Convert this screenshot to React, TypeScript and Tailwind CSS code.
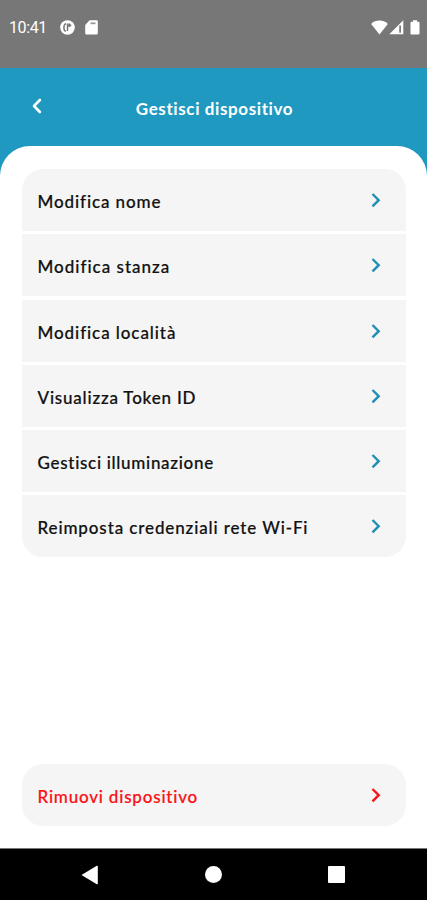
import React from "react";

interface MenuItem {
    label: string;
    tracking: string;
}

const items: MenuItem[] = [
    { label: "Modifica nome", tracking: "tracking-[0.9px]" },
    { label: "Modifica stanza", tracking: "tracking-[1px]" },
    { label: "Modifica località", tracking: "tracking-[0.92px]" },
    { label: "Visualizza Token ID", tracking: "tracking-[0.8px]" },
    { label: "Gestisci illuminazione", tracking: "tracking-[0.7px]" },
    { label: "Reimposta credenziali rete Wi-Fi", tracking: "tracking-[0.88px]" },
];

const Chevron: React.FC<{ className: string }> = ({ className }) => (
    <svg
        className={className}
        width="10"
        height="16"
        viewBox="0 0 10 16"
        fill="none"
        stroke="currentColor"
        strokeWidth="2.4"
    >
        <path d="M1.5 2 7.700 8.200l-6.200 6.200" />
    </svg>
);

const StatusBar: React.FC = () => (
    <div className="flex h-[68px] shrink-0 items-start bg-[#777777] pt-[19px] text-white">
        <span className="ml-[9px] w-[51px] font-[Roboto,sans-serif] text-[16px] leading-[18px] tracking-[-0.4px]">
            10:41
        </span>
        <svg className="mt-px" width="15" height="15" viewBox="0 0 15 15">
            <circle cx="7.5" cy="7.5" r="7.3" fill="#fff" />
            <path
                d="M6 3.600C4.500 4 3.800 5.600 3.900 8c.1 1.800.8 3 1.900 3.300M7.500 3.500v7.600"
                fill="none"
                stroke="#777"
                strokeWidth="1.5"
            />
            <path d="M8.200 3.600h1.600l1.800 1.700-1.700 1.800H8.200z" fill="#777" />
        </svg>
        <svg className="ml-[10px] mt-px" width="13" height="15" viewBox="0 0 13 15">
            <path d="M4.600.3H11.500a1.300 1.300 0 0 1 1.300 1.300v11.600a1.300 1.300 0 0 1-1.300 1.300h-10A1.300 1.300 0 0 1 .2 13.200V4.900z" fill="#fff" />
            <path d="M5.500 3.300h5" stroke="#999" strokeWidth="1.8" />
        </svg>
        <svg className="ml-auto mt-px" width="17" height="15" viewBox="0 0 17 15">
            <path d="M8.500 14.400.2 3.900C2.600 1.700 5.300.6 8.500.6s5.900 1.100 8.300 3.300z" fill="#fff" />
        </svg>
        <svg className="ml-px mt-px" width="15" height="15" viewBox="0 0 15 15">
            <path d="M.3 14.300 14.300.3v14z" fill="#fff" />
            <path d="M11.100 5.500v7.300" stroke="#777" strokeWidth="1.7" />
        </svg>
        <svg className="ml-[6px] mr-[7px] mt-px" width="10" height="15" viewBox="0 0 10 15">
            <path d="M3 .2h4v1.500h1.600c.5 0 .9.4.9.9v11c0 .5-.4.900-.9.900H1.400a.9.900 0 0 1-.9-.9v-11c0-.5.4-.9.900-.9H3z" fill="#fff" />
        </svg>
    </div>
);

const App: React.FC = () => {
    return (
        <div className="flex h-[900px] w-[427px] flex-col overflow-hidden bg-white font-[Lato,sans-serif]">
            <StatusBar />
            <div className="flex grow flex-col bg-[#1f99bf]">
                <header className="grid h-[78px] shrink-0 grid-cols-[73px_1fr_71px] items-center text-white">
                    <button className="mb-[3px] ml-[32px]" aria-label="Indietro">
                        <svg
                            width="10"
                            height="16"
                            viewBox="0 0 10 16"
                            fill="none"
                            stroke="currentColor"
                            strokeWidth="2.6"
                            strokeLinecap="round"
                            strokeLinejoin="round"
                        >
                            <path d="M7.900 2 2 8l5.900 6" />
                        </svg>
                    </button>
                    <h1 className="mt-[3px] whitespace-nowrap text-center text-[17px] font-bold leading-[22px] tracking-[0.6px]">
                        Gestisci dispositivo
                    </h1>
                </header>

                <main className="flex grow flex-col rounded-t-[30px] bg-white pb-[22px] pl-[22px] pr-[21px] pt-[23px]">
                    <ul className="flex flex-col gap-[3.3px] overflow-hidden rounded-[21px]">
                        {items.map((item) => (
                            <li
                                key={item.label}
                                className="flex h-[62px] items-center justify-between bg-[#f5f5f5] pl-[15.5px] pr-[25px]"
                            >
                                <span
                                    className={`mt-[4px] whitespace-nowrap text-[17px] font-medium leading-[22px] text-[#111111] [-webkit-text-stroke:0.2px] ${item.tracking}`}
                                >
                                    {item.label}
                                </span>
                                <Chevron className="text-[#1f8fb5]" />
                            </li>
                        ))}
                    </ul>

                    <button className="mt-auto flex h-[62px] items-center justify-between rounded-[21px] bg-[#f5f5f5] pl-[15.5px] pr-[25px] text-[#fa1216]">
                        <span className="mt-[4px] whitespace-nowrap text-[17px] font-medium leading-[22px] tracking-[0.8px] [-webkit-text-stroke:0.2px]">
                            Rimuovi dispositivo
                        </span>
                        <Chevron className="text-[#fa1216]" />
                    </button>
                </main>
            </div>

            <nav className="flex h-[52px] shrink-0 items-center border-t border-[#777777] bg-black pl-[81px]">
                <svg width="18" height="20" viewBox="0 0 18 20" fill="#fff">
                    <path d="M.5 10 15.800.8q1-.5 1 .6v17.200q0 1.100-1 .6z" />
                </svg>
                <span className="ml-[106px] size-[17px] rounded-full bg-white" />
                <span className="ml-[106px] size-[17px] rounded-[1px] bg-white" />
            </nav>
        </div>
    );
};

export default App;
